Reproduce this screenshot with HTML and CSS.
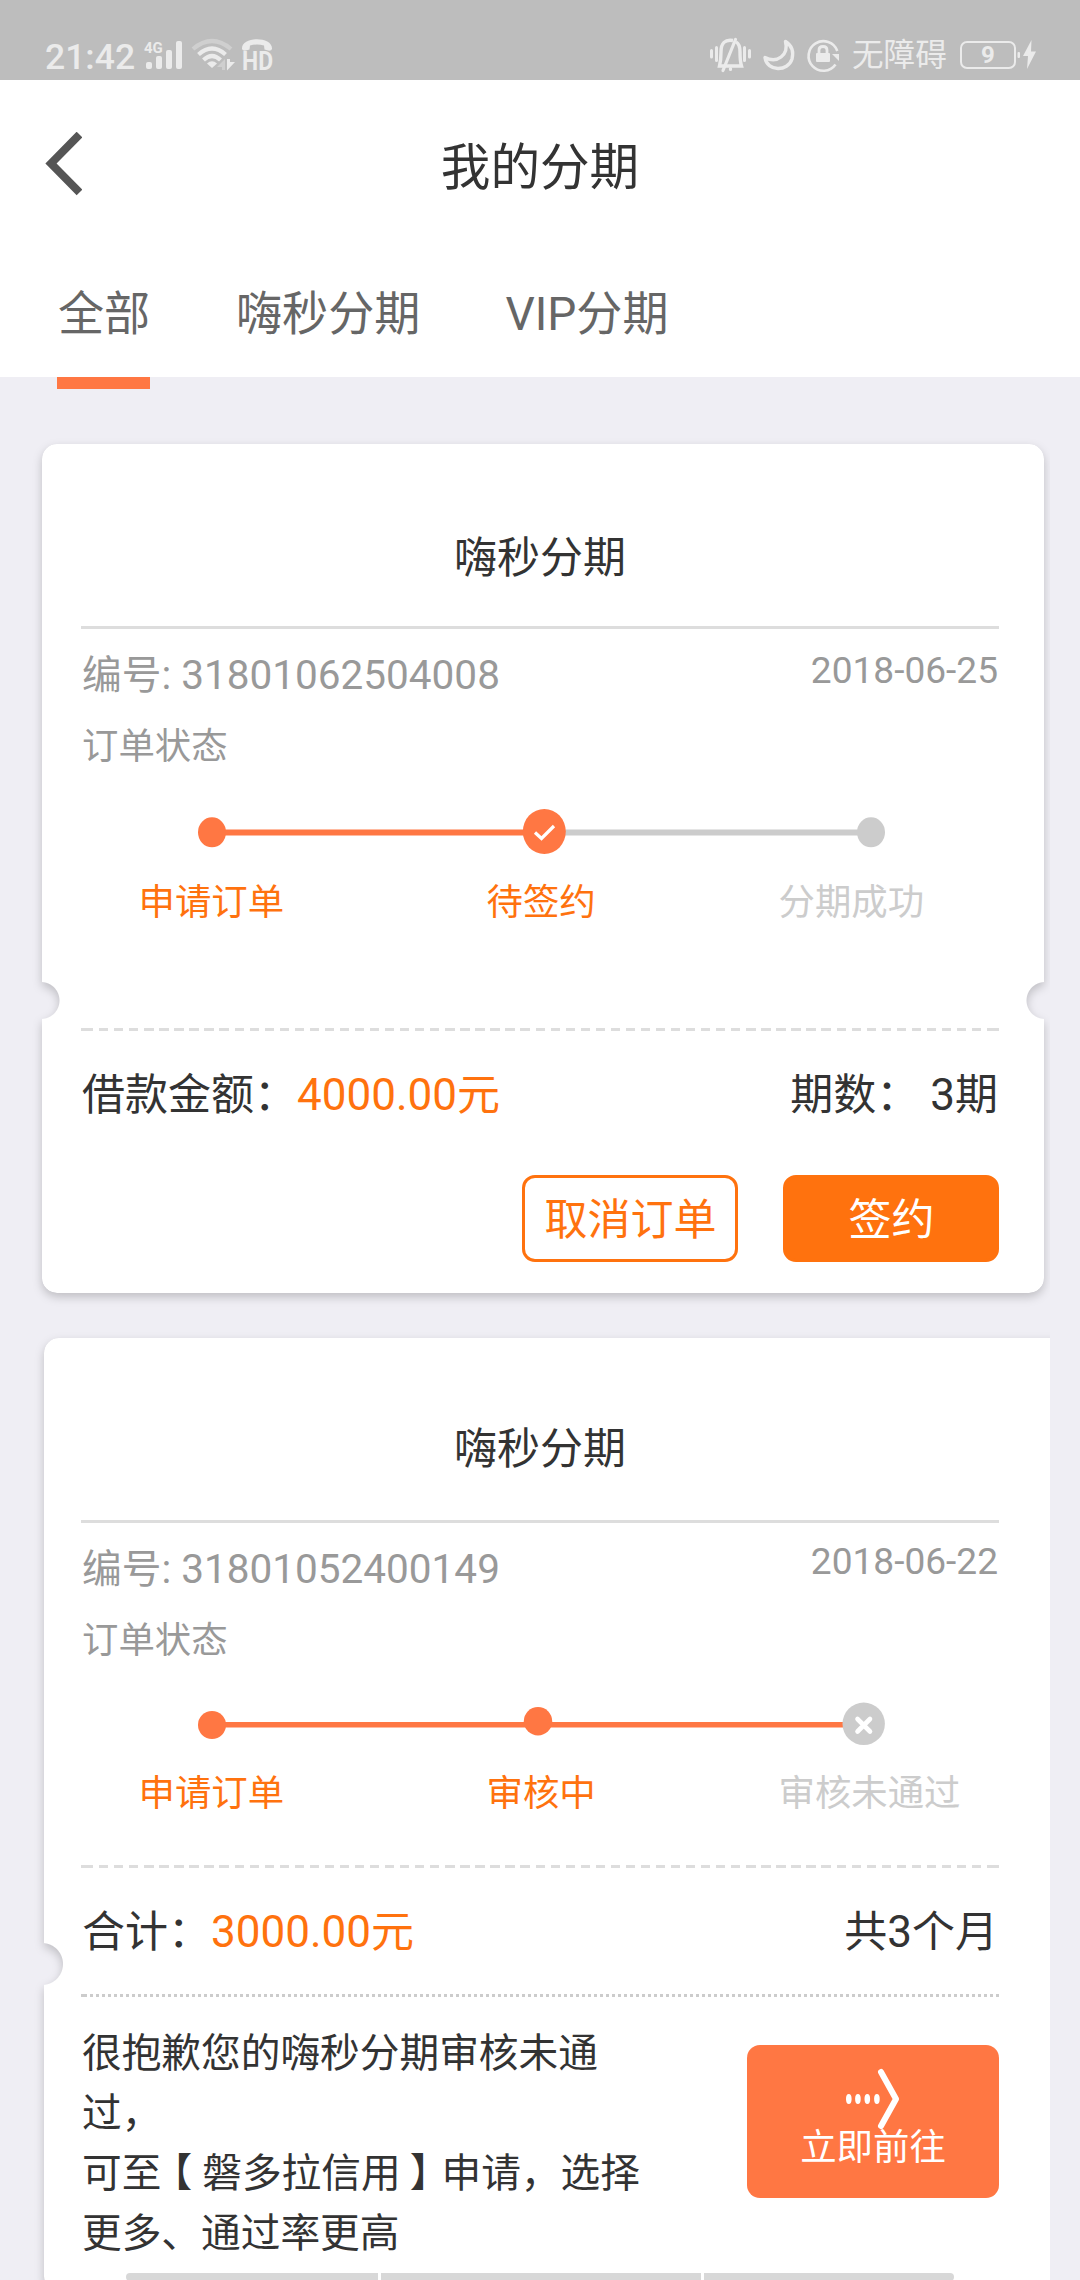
FILE: index.html
```html
<!DOCTYPE html>
<html lang="zh-CN">
<head>
<meta charset="utf-8">
<meta name="viewport" content="width=device-width">
<title>我的分期</title>
<link rel="stylesheet" href="styles.css">
</head>
<body>
<div class="screen">
  <div class="status-bar">
    <div class="status-left">
      <span class="clock">21:42</span>
      <svg class="signal" width="40" height="34" viewBox="143 38 40 34">
        <text x="144" y="52.500" class="net">4G</text>
        <rect x="146" y="62" width="6" height="7" rx="2"/><rect x="156" y="56" width="6" height="13" rx="2"/><rect x="166" y="50" width="6" height="19" rx="2"/><rect x="176" y="41" width="6" height="28" rx="2"/>
      </svg>
      <svg class="wifi" width="44" height="34" viewBox="192 39 44 34">
        <g fill="none" stroke="#ebebeb" stroke-width="4.2">
          <path d="M193 50Q212 34 231 50" stroke="#cfcfcf"/>
          <path d="M198.500 55.500Q212 43.500 225.500 55.500"/>
          <path d="M203.500 61Q212 53 220.500 61"/>
        </g>
        <path d="M207 64.500Q212 60 217 64.500L212 69Z"/>
        <path d="M225 60V71H222V68H217Z" fill="#cfcfcf"/>
        <path d="M227 60H230V63H235L227 71.500Z"/>
      </svg>
      <svg class="hd" width="34" height="44" viewBox="241 33 34 44">
        <path d="M242 49C241 36 273 36 272 49Q271 52 264.500 49.500L264 45.500Q257 43.500 250 45.500L249.500 49.500Q243 52 242 49Z"/>
        <text x="242" y="70" class="hd-label" textLength="31" lengthAdjust="spacingAndGlyphs">HD</text>
      </svg>
    </div>
    <div class="status-right">
      <svg width="42" height="36" viewBox="710 37 42 36">
        <g fill="none" stroke="#ebebeb" stroke-width="3" stroke-linecap="round">
          <path d="M711.500 50.500V57M716.500 47.500V60.500M744.500 47.500V60.500M749.500 50.500V57"/>
          <path d="M733 40.500Q721 38.500 721 52Q721 60 719.500 66H741.500Q740 61 740 52Q740 44 736 42" stroke-width="3.400" stroke-linecap="butt"/>
          <path d="M735.500 39.500L723 70.500M730.500 68.500V69.500" stroke-width="3.200"/>
        </g>
      </svg>
      <svg class="moon" width="34" height="34" viewBox="762 38 34 34"><path d="M785.500 41.500C789 55 777 64 765 57.500C767 72 788 72 792 59C794 51 791 45 785.500 41.500Z" fill="none" stroke="#ebebeb" stroke-width="3.400" stroke-linejoin="round"/></svg>
      <svg class="lock" width="34" height="34" viewBox="806 38 34 34">
        <path d="M835.500 64.500A14.800 14.800 0 1 1 837.300 51" fill="none" stroke="#ebebeb" stroke-width="2.600"/>
        <path d="M832 54H839V61Z"/><rect x="816" y="53" width="14" height="9" rx="1"/>
        <path d="M819 54V50Q819 46.500 823 46.500T827 50V54" fill="none" stroke="#ebebeb" stroke-width="2.800"/>
      </svg>
      <span class="carrier">无障碍</span>
      <span class="battery">9</span>
      <svg class="bolt" width="20" height="32" viewBox="1017 39 20 32"><rect x="1017.500" y="52" width="2.500" height="6" rx="1"/><path d="M1031.500 40L1023 56H1028L1027 69L1036 51.500H1031Z"/></svg>
    </div>
  </div>

  <header class="nav">
    <svg class="back" width="37" height="64" viewBox="45 132 37 64"><path d="M79.500 134.500L51 163.500L79.500 192.500" fill="none" stroke="#555" stroke-width="8"/></svg>
    <h1>我的分期</h1>
  </header>
  <nav class="tabs">
    <a class="tab active">全部</a>
    <a class="tab">嗨秒分期</a>
    <a class="tab"><span class="latin">VIP</span>分期</a>
  </nav>

  <main class="orders">
    <section class="card card-sign">
      <div class="paper"></div>
      <div class="content">
        <h2>嗨秒分期</h2>
        <div class="meta"><span class="number">编号<span class="latin">: 31801062504008</span></span><span class="date">2018-06-25</span></div>
        <p class="state">订单状态</p>
        <svg class="track" width="918" height="50" viewBox="81 807 918 50">
          <g class="on"><rect x="212" y="829.500" width="320" height="6"/><ellipse cx="212" cy="832.300" rx="14" ry="15"/></g>
          <g class="off"><rect x="560" y="829.500" width="300" height="6"/><ellipse cx="871" cy="832.300" rx="14" ry="15"/></g>
          <ellipse class="on" cx="544.300" cy="831.500" rx="21.500" ry="22.500"/>
          <path class="mark" d="M535 832.500L541.500 838.500L554 826"/>
        </svg>
        <div class="labels"><span>申请订单</span><span>待签约</span><span class="pending">分期成功</span></div>
        <div class="dashed"></div>
        <div class="amount"><span>借款金额：<b><span class="latin">4000.00</span>元</b></span><span class="term">期数：<span class="latin"> 3</span>期</span></div>
        <div class="actions"><button class="btn outline">取消订单</button><button class="btn solid">签约</button></div>
      </div>
    </section>

    <section class="card card-reject">
      <div class="paper"></div>
      <div class="content">
        <h2>嗨秒分期</h2>
        <div class="meta"><span class="number">编号<span class="latin">: 31801052400149</span></span><span class="date">2018-06-22</span></div>
        <p class="state">订单状态</p>
        <svg class="track" width="918" height="50" viewBox="81 1700 918 50">
          <g class="on"><rect x="212" y="1722" width="640" height="5.500"/><circle cx="212" cy="1725" r="14"/><circle cx="538" cy="1721.300" r="14.200"/></g>
          <circle class="off" cx="863.700" cy="1723.800" r="21.200"/>
          <path class="mark thick" d="M857.500 1719L870 1731.500M870 1719L857.500 1731.500"/>
        </svg>
        <div class="labels"><span>申请订单</span><span>审核中</span><span class="pending">审核未通过</span></div>
        <div class="dashed"></div>
        <div class="amount"><span>合计：<b><span class="latin">3000.00</span>元</b></span><span class="term">共<span class="latin">3</span>个月</span></div>
        <div class="dotted"></div>
        <div class="notice">
          <p>很抱歉您的嗨秒分期审核未通<br>过，<br>可至<span class="open">【</span>磐多拉信用<span class="close">】</span>申请，选择<br>更多、通过率更高</p>
          <a class="go">
            <svg width="54" height="62" viewBox="847 2068 54 62"><g fill="#fff"><ellipse cx="849.800" cy="2099" rx="2.800" ry="5"/><ellipse cx="858.900" cy="2099" rx="2.800" ry="5"/><ellipse cx="868.300" cy="2099" rx="2.800" ry="5"/><ellipse cx="877.900" cy="2099" rx="2.800" ry="5"/></g><path d="M882 2072L897 2099L882 2126" fill="none" stroke="#fff" stroke-width="6" stroke-linecap="round" stroke-linejoin="round"/></svg>
            <span>立即前往</span>
          </a>
        </div>
      </div>
    </section>
  </main>
  <div class="gesture"><i></i><i></i><i></i></div>
</div>
</body>
</html>
```
FILE: styles.css
```css
* { box-sizing: border-box; margin: 0; padding: 0; }
body { background: #efeef4; font-family: Roboto, "Noto Sans CJK SC", sans-serif; color: #333; }
svg { display: block; flex: none; }
h1, h2, b { font-weight: 400; }
.screen { position: relative; width: 1080px; height: 2280px; overflow: hidden; display: flex; flex-direction: column; }

.status-bar { flex: none; height: 80px; background: #bdbdbd; color: #ebebeb; display: flex; justify-content: space-between; padding: 30px 43px 0 44px; }
.status-bar svg { fill: #ebebeb; overflow: visible; }
.status-left, .status-right { display: flex; align-items: center; height: 50px; }
.clock { font-size: 35.5px; font-weight: 500; width: 99px; line-height: 50px; padding: 3px 0 0 1px; }
.net { font: 700 15px Roboto, sans-serif; }
.wifi { margin-left: 9px; }
.hd { margin-left: 5px; }
.hd-label { font: 700 26px Roboto, sans-serif; }
.moon { margin-left: 10px; }
.lock { margin-left: 10px; }
.carrier { font-size: 31.6px; line-height: 50px; margin-left: 12px; width: 108px; padding-top: 1px; }
.battery { width: 56px; height: 28px; border: 2px solid #ebebeb; border-radius: 7px; font-size: 24px; font-weight: 700; line-height: 25px; text-align: center; }
.bolt { margin-left: 1px; }

.nav { flex: none; height: 167px; background: #fff; display: grid; grid-template-columns: 150px 1fr 150px; }
.back { margin: 52px 0 0 45px; }
h1 { font-size: 49.6px; line-height: 66px; padding-top: 55px; text-align: center; }
.tabs { flex: none; height: 130px; background: #fff; display: flex; padding-left: 57px; }
.tab { font-size: 46.1px; line-height: 66px; padding-top: 34px; color: #666; margin-right: 85px; height: 142px; white-space: nowrap; }
.tab.active { width: 93px; margin-right: 86px; padding-left: 1px; border-bottom: 12px solid #ff7743; }

.orders { flex: none; width: 1050px; padding-top: 67px; display: flex; flex-direction: column; gap: 45px; overflow: clip; }
.card { position: relative; }
.paper { position: absolute; inset: 0; filter: drop-shadow(0 4px 5px rgba(0,0,0,.2)); }
.paper::before { content: ""; position: absolute; inset: 0; background: #fff; border-radius: 15px; }
.content { position: relative; margin: 0 51px 0 81px; }
.card-sign { height: 849px; }
.card-sign .paper { left: 42px; right: 6px; }
.card-sign .paper::before {
  mask: radial-gradient(circle at -1px 556.5px, transparent 18px, #000 19px) left / 50% 100% no-repeat,
        radial-gradient(circle at calc(100% + 1px) 556.5px, transparent 18px, #000 19px) right / 50% 100% no-repeat;
}
.card-reject { height: 953px; }
.card-reject .paper { left: 44px; right: -20px; }
.card-reject .paper::before { mask: radial-gradient(circle at -2px 626px, transparent 20.5px, #000 21.5px); }

h2 { height: 182px; padding-top: 84px; font-size: 43px; line-height: 60px; text-align: center; }
.meta { height: 94px; border-top: 3px solid #ddd; display: flex; justify-content: space-between; color: #999; padding: 0 1px; }
.number { font-size: 39.7px; line-height: 60px; padding-top: 16px; }
.number .latin { font-size: 40.5px; }
.date { font-size: 37.1px; line-height: 60px; padding-top: 12px; }
.state { color: #999; font-size: 36.4px; line-height: 50px; height: 87px; padding: 2px 1px; }
.labels { display: grid; grid-template-columns: 348px 292px 1fr; padding-left: 57.5px; font-size: 36.4px; line-height: 50px; color: #ff720e; }
.labels .pending { color: #ccc; }
.on { fill: #ff7743; }
.off { fill: #ccc; }
.mark { fill: none; stroke: #fff; stroke-width: 3.2; }
.thick { stroke-width: 4.6; stroke-linecap: round; }
.card-sign .labels { height: 171px; padding-top: 21px; }
.dashed { height: 3px; background:
  linear-gradient(#ddd, #ddd) left / 12px 3px no-repeat,
  linear-gradient(#ddd, #ddd) right / 12px 3px no-repeat,
  repeating-linear-gradient(90deg, #ddd 0 9.3px, transparent 9.3px 15.05px) 3px 0 / 915px 3px no-repeat; }
.amount { display: flex; justify-content: space-between; font-size: 43px; line-height: 60px; padding: 34px 1px 0; white-space: pre; }
.amount .latin { font-size: 44px; }
.amount b { color: #ff720e; }
.card-sign .amount { height: 144px; }
.actions { display: flex; justify-content: flex-end; gap: 45px; }
.btn { width: 216px; height: 87px; border-radius: 13px; border: 3px solid #ff720e; font: inherit; font-size: 43px; line-height: 60px; padding: 3px 0 0 1px; }
.outline { background: #fff; color: #ff720e; }
.solid { background: #ff720e; color: #fff; }

.card-reject h2 { padding-top: 81px; }
.card-reject .date { padding-top: 9px; }
.card-reject .state { height: 86px; }
.card-reject .labels { height: 115px; padding-top: 19px; }
.card-reject .amount { height: 126px; }
.dotted { height: 3px; background:
  linear-gradient(#ccc, #ccc) left / 6px 3px no-repeat,
  repeating-linear-gradient(90deg, #ccc 0 3px, transparent 3px 6px) 3px 0 / 915px 3px no-repeat; }
.notice { display: flex; justify-content: space-between; align-items: flex-start; }
.notice p { font-size: 39.7px; line-height: 60px; padding: 27px 0 0 1px; white-space: nowrap; }
.open, .close { font-feature-settings: "halt"; }
.open { margin: 0 10px 0 11px; }
.close { margin: 0 12px 0 9px; }
.go { width: 252px; height: 153px; margin-top: 48px; border-radius: 13px; background: #ff7743; color: #fff; display: flex; flex-direction: column; align-items: center; padding-top: 23px; }
.go span { font-size: 36.4px; line-height: 50px; margin-top: -7px; }

.gesture { position: absolute; left: 126px; top: 2273px; width: 828px; height: 8px; display: grid; grid-template-columns: 251.5px 320px 1fr; gap: 3px; border-radius: 4px; overflow: hidden; }
.gesture i { background: #d8d8d8; }
```
